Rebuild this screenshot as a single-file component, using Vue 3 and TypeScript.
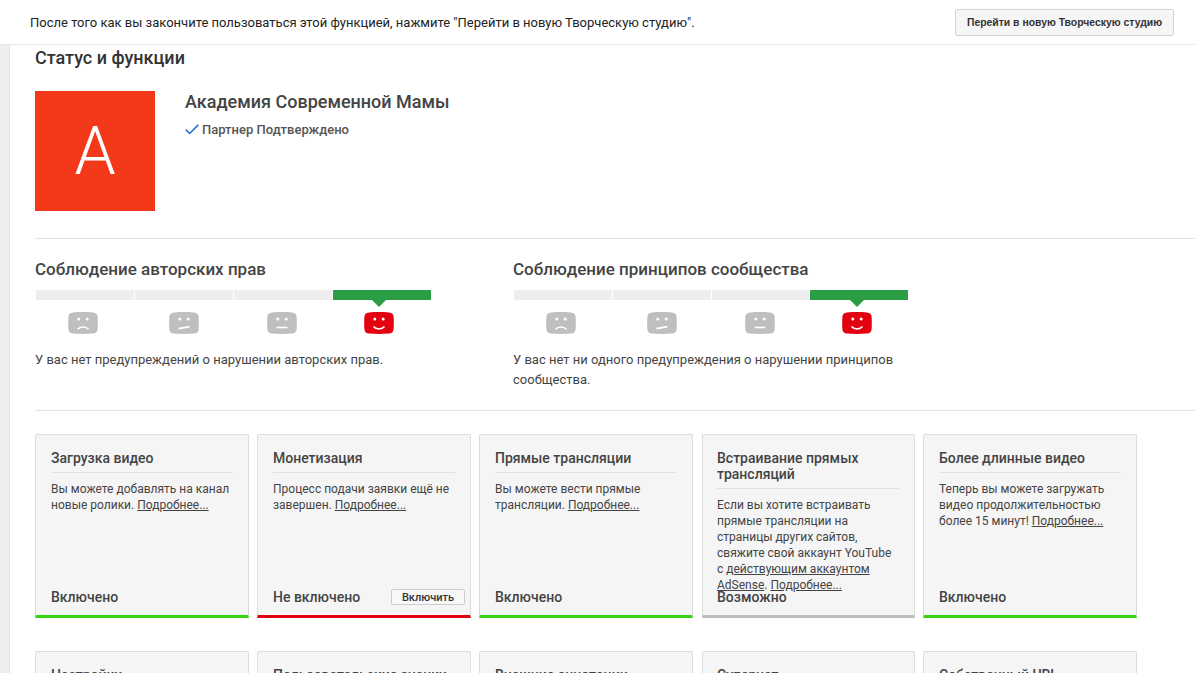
<script setup lang="ts">
interface Card {
  title: string
  text: string
  linkText?: string
  status: string
  tone: 'on' | 'off' | 'maybe'
  action?: string
}
interface Strike {
  title: string
  text: string
}

const strikes: Strike[] = [
  { title: 'Соблюдение авторских прав', text: 'У вас нет предупреждений о нарушении авторских прав.' },
  { title: 'Соблюдение принципов сообщества', text: 'У вас нет ни одного предупреждения о нарушении принципов сообщества.' },
]
const mouths: string[] = [
  'M9.5 17.2c2.6-3 8.4-3 11 0',
  'M9.5 16.6l11-2',
  'M9.5 15.5h11',
  'M9.5 14.6c2.6 3.2 8.4 3.2 11 0',
]
const cards: Card[] = [
  { title: 'Загрузка видео', text: 'Вы можете добавлять на канал новые ролики.', status: 'Включено', tone: 'on' },
  { title: 'Монетизация', text: 'Процесс подачи заявки ещё не завершен.', status: 'Не включено', tone: 'off', action: 'Включить' },
  { title: 'Прямые трансляции', text: 'Вы можете вести прямые трансляции.', status: 'Включено', tone: 'on' },
  { title: 'Встраивание прямых трансляций', text: 'Если вы хотите встраивать прямые трансляции на страницы других сайтов, свяжите свой аккаунт YouTube с', linkText: 'действующим аккаунтом AdSense', status: 'Возможно', tone: 'maybe' },
  { title: 'Более длинные видео', text: 'Теперь вы можете загружать видео продолжительностью более 15 минут!', status: 'Включено', tone: 'on' },
  { title: 'Настройки', text: '', status: '', tone: 'on' },
  { title: 'Пользовательские значки', text: '', status: '', tone: 'on' },
  { title: 'Внешние аннотации', text: '', status: '', tone: 'on' },
  { title: 'Суперчат', text: '', status: '', tone: 'on' },
  { title: 'Собственный URL', text: '', status: '', tone: 'on' },
]
</script>

<template>
  <div class="page">
    <header class="topbar">
      <span>После того как вы закончите пользоваться этой функцией, нажмите "Перейти в новую Творческую студию".</span>
      <button class="studio-btn" type="button">Перейти в новую Творческую студию</button>
    </header>
    <div class="layout">
      <aside class="gutter"></aside>
      <main class="content">
        <h1 class="page-title">Статус и функции</h1>
        <section class="channel">
          <div class="avatar">А</div>
          <div class="channel-info">
            <h2 class="channel-name">Академия Современной Мамы</h2>
            <div class="partner">
              <svg width="14" height="11" viewBox="0 0 14 11" fill="none" stroke="#1c6fc8" stroke-width="1.5"><path d="M.8 5.6l3.9 3.9L13.2.9" /></svg>
              <span>Партнер Подтверждено</span>
            </div>
          </div>
        </section>
        <section class="strikes">
          <div v-for="s in strikes" :key="s.title" class="strike">
            <h3 class="strike-title">{{ s.title }}</h3>
            <div class="meter">
              <i></i><i></i><i></i><i class="active"></i>
            </div>
            <div class="faces">
              <div v-for="(m, i) in mouths" :key="m" class="face" :class="{ current: i === 3 }">
                <svg width="30" height="22" viewBox="0 0 30 22">
                  <path :fill="i === 3 ? '#e3000f' : '#bfbfbf'" d="M5 .4C11 0 19 0 25 .4c3 .2 4.4 1.6 4.6 4.3.3 4 .3 8.6 0 12.6-.2 2.7-1.6 4.1-4.6 4.3-6 .4-14 .4-20 0-3-.2-4.4-1.6-4.6-4.3-.3-4-.3-8.6 0-12.6C.6 2 2 .6 5 .4z" />
                  <circle cx="10.8" cy="7" r="1.5" fill="#fff" />
                  <circle cx="19.2" cy="7" r="1.5" fill="#fff" />
                  <path :d="m" fill="none" stroke="#fff" stroke-width="1.6" />
                </svg>
              </div>
            </div>
            <p class="strike-text">{{ s.text }}</p>
          </div>
        </section>
        <section class="cards">
          <article v-for="c in cards" :key="c.title" class="card" :class="c.tone">
            <h4 class="card-title">{{ c.title }}</h4>
            <p class="card-text">
              <template v-if="c.text">
                {{ c.text }}{{ ' ' }}<template v-if="c.linkText"><a class="lnk">{{ c.linkText }}</a>.{{ ' ' }}</template><a class="lnk">Подробнее...</a>
              </template>
            </p>
            <div class="card-foot">
              <span class="status">{{ c.status }}</span>
              <button v-if="c.action" class="enable" type="button">{{ c.action }}</button>
            </div>
          </article>
        </section>
      </main>
    </div>
  </div>
</template>

<style>
html, body { margin: 0; background: #fff; overflow: hidden; }
</style>

<style scoped>
.page {
  width: 1195px;
  height: 673px;
  overflow: hidden;
  font-family: Roboto, "Liberation Sans", sans-serif;
  color: #444;
}
.topbar {
  height: 45px;
  box-sizing: border-box;
  border-bottom: 1px solid #e6e6e6;
  display: flex;
  align-items: center;
  justify-content: space-between;
  padding: 0 21px 0 30px;
  font-size: 13px;
  color: #222;
}
.studio-btn {
  width: 219px;
  height: 27px;
  padding: 0;
  border: 1px solid #d3d3d3;
  border-radius: 2px;
  background: #f6f6f6;
  color: #333;
  font: bold 10.4px "Liberation Sans", Arial, sans-serif;
}
.layout { display: flex; }
.gutter {
  width: 9px;
  flex: none;
  height: 628px;
  background: #eee;
  border-right: 1px solid #e4e4e4;
}
.content {
  flex: none;
  width: 1185px;
  padding-left: 25px;
  box-sizing: border-box;
}
.page-title {
  margin: 3px 0 0;
  font-size: 18px;
  line-height: 20px;
  font-weight: 500;
  color: #333;
}
.channel {
  display: flex;
  gap: 30px;
  margin-top: 23px;
  padding-bottom: 27px;
  border-bottom: 1px solid #e2e2e2;
}
.avatar {
  width: 120px;
  height: 120px;
  background: #f4391a;
  color: #fff;
  font-size: 66px;
  font-weight: 300;
  display: flex;
  align-items: center;
  justify-content: center;
}
.channel-name {
  margin: 0;
  font-size: 18px;
  line-height: 22px;
  font-weight: 500;
  color: #444;
}
.partner {
  display: flex;
  align-items: center;
  gap: 3px;
  margin-top: 9px;
  font-size: 13px;
  font-weight: 500;
  color: #555;
}
.strikes {
  display: flex;
  gap: 82px;
  height: 172px;
  box-sizing: border-box;
  padding-top: 20px;
  border-bottom: 1px solid #e2e2e2;
}
.strike { width: 396px; }
.strike-title {
  margin: 0;
  font-size: 17px;
  line-height: 20px;
  font-weight: 500;
  color: #444;
}
.meter {
  display: flex;
  gap: 1px;
  width: 394px;
  height: 10px;
  margin: 11px 0 0 1px;
}
.meter i { flex: 1; background: #eee; }
.meter i.active { background: #2b9d44; }
.strike:first-child .meter { width: 395px; }
.faces {
  display: flex;
  margin: 12px 0 0 33px;
  height: 22px;
}
.face { position: relative; width: 30px; height: 22px; }
.face:nth-child(2) { margin-left: 71px; }
.face:nth-child(3) { margin-left: 68px; }
.face:nth-child(4) { margin-left: 67px; }
.face svg { display: block; }
.face.current::before {
  content: "";
  position: absolute;
  left: 8px;
  top: -12px;
  border: 7px solid transparent;
  border-top-color: #2b9d44;
  border-bottom: 0;
}
.strike-text {
  margin: 16px 0 0;
  font-size: 13px;
  line-height: 20px;
  color: #444;
}
.cards {
  display: grid;
  grid-template-columns: repeat(5, 214px);
  column-gap: 8px;
  row-gap: 33px;
  margin-top: 23px;
}
.card {
  position: relative;
  display: flex;
  flex-direction: column;
  height: 184px;
  box-sizing: border-box;
  padding: 15px 15px 0;
  background: #f5f5f5;
  border: 1px solid #dcdcdc;
  border-bottom: 3px solid #37d411;
  border-radius: 2px 2px 0 0;
}
.card:nth-child(5n + 4) { margin-left: 1px; padding-left: 14px; }
.card.off { border-bottom-color: #e0000f; }
.card.maybe { border-bottom-color: #bdbdbd; }
.card-title {
  margin: 0;
  padding-bottom: 6px;
  border-bottom: 1px solid #e2e2e2;
  font-size: 14px;
  line-height: 16px;
  font-weight: 500;
  color: #444;
}
.card-text {
  margin: 8px 0 0;
  flex: 1;
  min-height: 0;
  font-size: 12px;
  line-height: 16px;
  color: #444;
}
.lnk { text-decoration: underline; color: #444; }
.card-foot {
  display: flex;
  align-items: center;
  justify-content: space-between;
  height: 20px;
  margin: 0 -10px 8px 0;
}
.status { font-size: 14px; font-weight: 500; color: #444; }
.enable {
  width: 74px;
  height: 16px;
  padding: 0;
  border: 1px solid #ccc;
  border-radius: 2px;
  background: #f8f8f8;
  color: #333;
  font: 500 11px Roboto, sans-serif;
}
</style>
